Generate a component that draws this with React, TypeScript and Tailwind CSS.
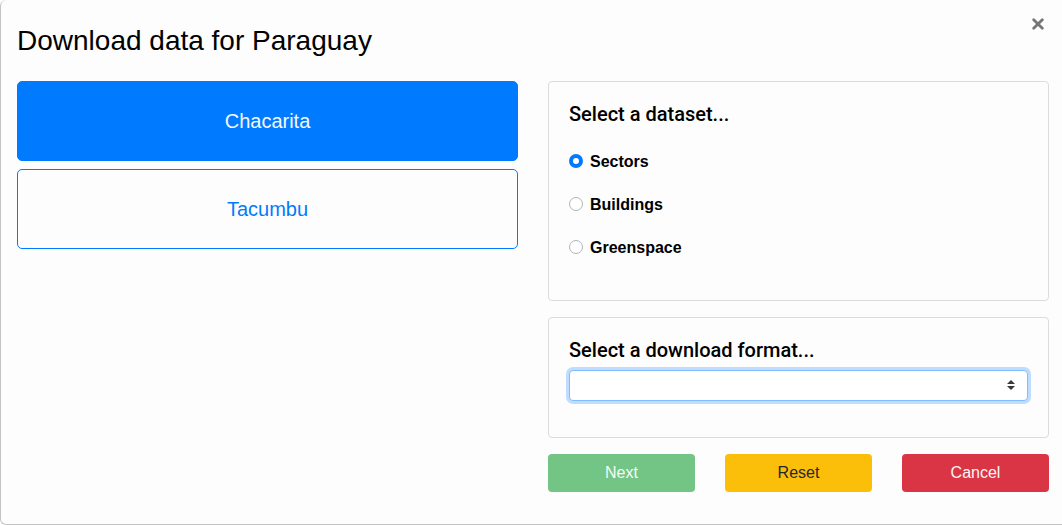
import { useState } from "react";

const regions = ["Chacarita", "Tacumbu"];
const datasets = ["Sectors", "Buildings", "Greenspace"];

export default function App() {
  const [region, setRegion] = useState("Chacarita");
  const [dataset, setDataset] = useState("Sectors");

  return (
    <main
      role="dialog"
      aria-labelledby="dialog-title"
      className="flex min-h-screen flex-col rounded-l-md border-b border-l border-[#c4c4c6] bg-[#fdfdfd] pt-6 pr-[13px] pb-8 pl-4 font-['Liberation_Sans',Arial,sans-serif] text-base text-black"
    >
      <header className="flex items-start justify-between">
        <h1 id="dialog-title" className="text-[28px] leading-[34px]">
          Download data for Paraguay
        </h1>
        <button
          type="button"
          aria-label="Close"
          className="-mt-3 -mr-px flex size-6 items-center justify-center text-[#757575]"
        >
          <svg
            viewBox="0 0 12 12"
            className="size-3"
            fill="none"
            stroke="currentColor"
            strokeWidth="2.8"
            strokeLinecap="round"
          >
            <path d="M1.7 1.7L10.3 10.3M10.3 1.7L1.7 10.3" />
          </svg>
        </button>
      </header>

      <div className="mt-[23px] grid grid-cols-2 gap-[30px]">
        <section aria-label="Region" className="flex flex-col gap-2">
          {regions.map((name) => (
            <button
              key={name}
              type="button"
              aria-pressed={region === name}
              onClick={() => setRegion(name)}
              className={
                region === name
                  ? "h-20 rounded-[5px] border border-[#007bff] bg-[#007bff] text-xl text-[#f4f8fd]"
                  : "h-20 rounded-[5px] border border-[#007bff] text-xl text-[#007bff]"
              }
            >
              {name}
            </button>
          ))}
        </section>

        <section className="flex flex-col gap-4">
          <fieldset className="h-[220px] rounded border border-[#dcdcdd] px-5 pt-5">
            <h2 className="font-[Roboto,sans-serif] text-xl leading-6 font-medium">Select a dataset...</h2>
            <div className="mt-6 flex flex-col gap-[19px]">
              {datasets.map((name) => (
                <label key={name} className="flex items-center gap-[7px] leading-6 font-bold">
                  <input
                    type="radio"
                    name="dataset"
                    checked={dataset === name}
                    onChange={() => setDataset(name)}
                    className="mb-0.5 size-[14px] appearance-none rounded-full border border-[#adb5bd] bg-white checked:border-4 checked:border-[#007bff]"
                  />
                  {name}
                </label>
              ))}
            </div>
          </fieldset>

          <div className="h-[121px] rounded border border-[#dcdcdd] px-5 pt-5">
            <label htmlFor="format" className="block font-[Roboto,sans-serif] text-xl leading-6 font-medium">
              Select a download format...
            </label>
            <div className="relative mt-2">
              <select
                id="format"
                defaultValue=""
                className="block h-[31px] w-full appearance-none rounded border border-[#80bdff] bg-white px-2 text-sm ring-3 ring-[#bfdeff] outline-none"
              >
                <option value=""></option>
                <option value="csv">CSV</option>
                <option value="geojson">GeoJSON</option>
              </select>
              <svg
                viewBox="0 0 4 5"
                aria-hidden="true"
                className="pointer-events-none absolute top-[10px] right-[13px] h-[10px] w-2"
                fill="#343a40"
              >
                <path d="M2 0L0 2h4zm0 5L0 3h4z" />
              </svg>
            </div>
          </div>

          <div className="grid grid-cols-3 gap-[30px]">
            <button type="button" disabled className="h-[38px] rounded bg-[#73c586] text-[#f4fbf5]">
              Next
            </button>
            <button type="button" className="h-[38px] rounded bg-[#fcbf09] text-[#24282b]">
              Reset
            </button>
            <button type="button" className="h-[38px] rounded bg-[#da3545] text-[#fdf5f5]">
              Cancel
            </button>
          </div>
        </section>
      </div>
    </main>
  );
}
